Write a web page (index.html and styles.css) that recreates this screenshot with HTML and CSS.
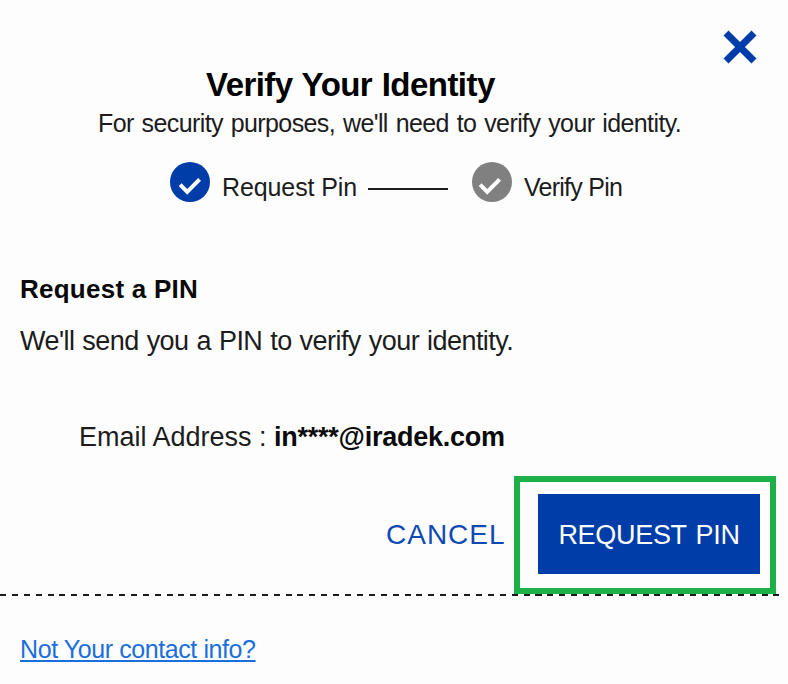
FILE: index.html
```html
<!DOCTYPE html>
<html lang="en">
<head>
    <meta charset="UTF-8">
    <meta name="viewport" content="width=device-width, initial-scale=1.0">
    <title>Verify Your Identity</title>
    <link rel="stylesheet" href="styles.css">
</head>
<body>
    <div class="modal">
        <div class="modal-top">
            <button class="close-button" aria-label="Close">
                <svg width="34" height="34" viewBox="0 0 34 34"><path d="M3 3L31 31M31 3L3 31"/></svg>
            </button>
        </div>
        <h1>Verify Your Identity</h1>
        <p class="subtitle">For security purposes, we'll need to verify your identity.</p>

        <div class="steps">
            <svg class="step-icon active" width="40" height="40" viewBox="0 0 40 40"><circle cx="20" cy="20" r="20"/><path d="M10.2 22.6L17.2 29.9L29.6 17.4"/></svg>
            <span class="step-label first">Request Pin</span>
            <div class="step-line"></div>
            <svg class="step-icon" width="40" height="40" viewBox="0 0 40 40"><circle cx="20" cy="20" r="20"/><path d="M8.2 22.6L15.2 29.9L27.6 17.4"/></svg>
            <span class="step-label second">Verify Pin</span>
        </div>

        <h2>Request a PIN</h2>
        <p class="message">We'll send you a PIN to verify your identity.</p>
        <p class="email">Email Address : <b>in****@iradek.com</b></p>

        <div class="actions">
            <button class="cancel-button">CANCEL</button>
            <div class="highlight">
                <button class="request-button">REQUEST PIN</button>
            </div>
        </div>
        <div class="divider"></div>
        <a class="contact-link" href="#">Not Your contact info?</a>
    </div>
</body>
</html>
```

FILE: styles.css
```css
body {
    margin: 0;
    font-family: "Liberation Sans", Arial, sans-serif;
    background-color: #fdfdfd;
    color: #1c1c1c;
    overflow: hidden;
}
h1, h2, p {
    margin: 0;
    font-weight: normal;
    white-space: nowrap;
}
button {
    border: none;
    padding: 0;
    background: none;
    font-family: inherit;
    cursor: pointer;
}
.modal {
    height: 684px;
    display: flex;
    flex-direction: column;
}
.modal-top {
    display: flex;
    justify-content: flex-end;
    height: 37px;
    padding: 30px 31px 0 0;
}
.close-button {
    width: 34px;
    height: 34px;
}
.close-button svg {
    display: block;
    fill: none;
    stroke: #003da9;
    stroke-width: 7;
}
h1 {
    padding-left: 206px;
    font-size: 33px;
    font-weight: bold;
    line-height: 36px;
    letter-spacing: -0.55px;
    word-spacing: 1px;
    color: #000;
}
.subtitle {
    margin-top: 6px;
    padding-left: 98px;
    font-size: 25px;
    line-height: 28px;
    letter-spacing: -0.6px;
    word-spacing: 1.5px;
}
.steps {
    display: flex;
    margin-top: 25px;
    padding-left: 170px;
    height: 40px;
}
.step-icon circle {
    fill: #808080;
}
.step-icon.active circle {
    fill: #003da9;
}
.step-icon path {
    fill: none;
    stroke: #fff;
    stroke-width: 4;
}
.step-label {
    padding-top: 10px;
    font-size: 25px;
    line-height: 30px;
    white-space: nowrap;
}
.first {
    width: 146px;
    margin-left: 12px;
    letter-spacing: -0.1px;
}
.second {
    margin-left: 12px;
    letter-spacing: -0.75px;
}
.step-line {
    width: 80px;
    height: 2px;
    margin: 26px 24px 0 0;
    background-color: #1c1c1c;
}
h2 {
    margin-top: 72px;
    padding-left: 20px;
    font-size: 26px;
    font-weight: bold;
    line-height: 30px;
    letter-spacing: 0.25px;
    color: #0a0a0a;
}
.message {
    margin-top: 22px;
    padding-left: 20px;
    font-size: 27px;
    line-height: 30px;
    letter-spacing: -0.55px;
    word-spacing: 1px;
}
.email {
    margin-top: 66px;
    padding-left: 79px;
    font-size: 27px;
    line-height: 30px;
}
.email b {
    letter-spacing: -0.25px;
    color: #0a0a0a;
}
.actions {
    display: flex;
    align-items: center;
    margin-top: 24px;
    padding-left: 386px;
}
.cancel-button {
    width: 128px;
    text-align: left;
    font-size: 28px;
    letter-spacing: 1px;
    color: #0f4ab3;
}
.highlight {
    box-sizing: border-box;
    width: 262px;
    height: 118px;
    padding: 12px 10px 14px 18px;
    border: 6px solid #1cb046;
}
.request-button {
    display: block;
    width: 222px;
    height: 80px;
    padding-top: 2px;
    background-color: #003da9;
    color: #fff;
    font-size: 27px;
    letter-spacing: -0.3px;
    word-spacing: 2px;
    white-space: nowrap;
}
.divider {
    width: 780px;
    height: 2px;
    background-image: repeating-linear-gradient(90deg, #1c1c1c 0 6px, transparent 6px 11.9px);
}
.contact-link {
    align-self: flex-start;
    margin: 38px 0 0 20px;
    font-size: 25px;
    line-height: 30px;
    letter-spacing: -0.41px;
    color: #1a6fdc;
    text-decoration: underline;
    text-decoration-thickness: 2px;
    text-underline-offset: 2px;
    text-decoration-skip-ink: none;
}
```
